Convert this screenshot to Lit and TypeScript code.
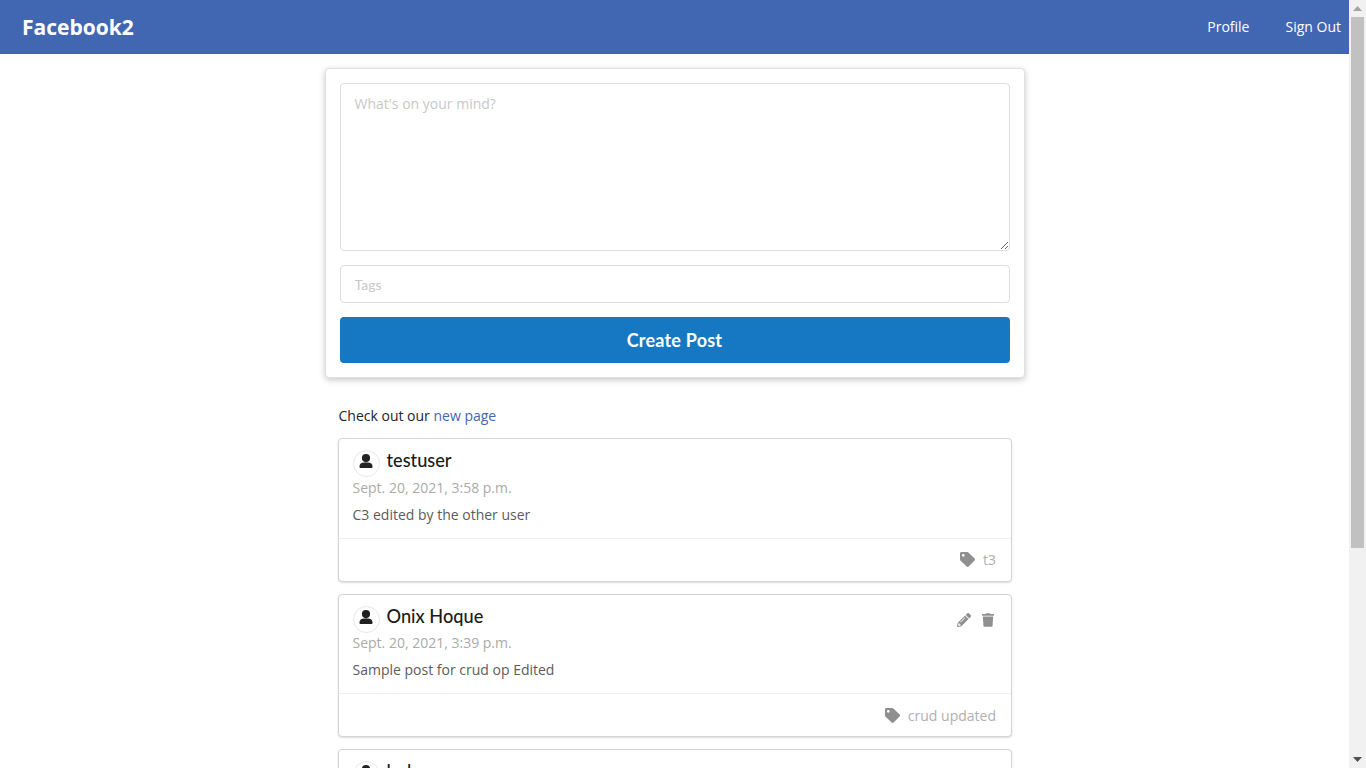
import { LitElement, html, css, svg } from "lit";
import { customElement } from "lit/decorators.js";

const icon = (vb: string, d: string, cls: string) =>
  html`<svg class=${cls} viewBox=${vb} aria-hidden="true">${svg`<path fill="currentColor" d=${d}></path>`}</svg>`;

const USER = "M7 0a4.1 4.1 0 1 1 0 8.2A4.1 4.1 0 0 1 7 0zM5 8.4h4c2.6 0 4.5 1.6 4.5 3.9v.7c0 .6-.5 1-1 1H1.500c-.5 0-1-.4-1-1v-.7c0-2.300 1.900-3.900 4.500-3.900z";
const TAG = "M0 252.118V48C0 21.49 21.49 0 48 0h204.118a48 48 0 0 1 33.941 14.059l211.882 211.882c18.745 18.745 18.745 49.137 0 67.882L293.823 497.941c-18.745 18.745-49.137 18.745-67.882 0L14.059 286.059A48 48 0 0 1 0 252.118zM112 64c-26.51 0-48 21.49-48 48s21.49 48 48 48 48-21.49 48-48-21.49-48-48-48z";
const PENCIL = "M497.9 142.1l-46.1 46.1c-4.7 4.7-12.3 4.7-17 0l-111-111c-4.7-4.7-4.7-12.3 0-17l46.1-46.1c18.7-18.7 49.1-18.7 67.9 0l60.1 60.1c18.8 18.7 18.8 49.1 0 67.9zM284.2 99.8L21.6 362.4.4 483.9c-2.9 16.4 11.4 30.6 27.8 27.8l121.5-21.3 262.6-262.6c4.7-4.7 4.7-12.3 0-17l-111-111c-4.8-4.7-12.4-4.7-17.1 0zM124.1 339.9c-5.5-5.5-5.5-14.3 0-19.8l154-154c5.5-5.5 14.3-5.5 19.8 0s5.5 14.3 0 19.8l-154 154c-5.5 5.5-14.3 5.5-19.8 0zM88 424h48v36.3l-64.5 11.3-31.1-31.1L51.7 376H88v48z";
const TRASH = "M432 32H312l-9.4-18.7A24 24 0 0 0 281.1 0H166.8a23.72 23.72 0 0 0-21.4 13.3L136 32H16A16 16 0 0 0 0 48v32a16 16 0 0 0 16 16h416a16 16 0 0 0 16-16V48a16 16 0 0 0-16-16zM53.2 467a48 48 0 0 0 47.9 45h245.8a48 48 0 0 0 47.9-45L416 128H32z";

interface Post { name: string; date: string; text: string; tags: string; own: boolean; }
const POSTS: Post[] = [
  { name: "testuser", date: "Sept. 20, 2021, 3:58 p.m.", text: "C3 edited by the other user", tags: "t3", own: false },
  { name: "Onix Hoque", date: "Sept. 20, 2021, 3:39 p.m.", text: "Sample post for crud op Edited", tags: "crud updated", own: true },
  { name: "bob", date: "Sept. 20, 2021, 3:12 p.m.", text: "Sample post", tags: "t1", own: false },
];

@customElement("app-root")
export class AppRoot extends LitElement {
  static styles = css`
    :host {
      display: flex;
      height: 100vh;
      overflow: hidden;
      background: #fff;
      font-family: "Open Sans", sans-serif;
      font-size: 14px;
      color: #212529;
    }
    .page { flex: 1; min-width: 0; overflow: hidden; }
    .scrollbar {
      flex: 0 0 17px;
      display: flex;
      flex-direction: column;
      background: #f1f1f1;
    }
    .arrow { flex: 0 0 17px; display: flex; align-items: center; justify-content: center; }
    .arrow svg { width: 9px; height: 5px; display: block; }
    .arrow.up { color: #a3a3a3; }
    .arrow.down { color: #505050; }
    .track { flex: 1; padding: 0 2px; }
    .thumb { height: 531px; background: #c1c1c1; }
    .nav {
      height: 54px;
      box-sizing: border-box;
      background: #4267b2;
      display: flex;
      align-items: center;
      justify-content: space-between;
      padding: 0 8px 2px 22px;
      color: #fff;
    }
    .brand { font-size: 21px; font-weight: 700; color: #fff; text-decoration: none; margin-top: 2px; }
    .links { display: flex; gap: 36px; }
    .links a { color: #fff; text-decoration: none; font-size: 14px; }
    .composer {
      width: 700px;
      box-sizing: border-box;
      margin: 14px auto 0;
      padding: 14px;
      background: #fff;
      border: 1px solid #e0e0e0;
      border-radius: 4px;
      box-shadow: 0 2px 6px rgba(0, 0, 0, 0.22);
      display: flex;
      flex-direction: column;
      gap: 14px;
    }
    textarea, input {
      display: block;
      width: 100%;
      box-sizing: border-box;
      border: 1px solid #dedede;
      border-radius: 4px;
      background: #fff;
      outline: none;
      margin: 0;
      padding: 10px 14px;
      color: #333;
    }
    textarea { height: 168px; font: 14px/20px "Open Sans", sans-serif; resize: vertical; }
    input { height: 38px; font: 14px "Lato", sans-serif; }
    ::placeholder { color: #c8c8c8; opacity: 1; }
    .submit {
      height: 46px;
      border: 0;
      border-radius: 4px;
      background: #1678c2;
      color: #fff;
      font: 700 18px "Lato", sans-serif;
      letter-spacing: 0.2px;
    }
    .feed { width: 674px; margin: 0 auto; padding: 28px 0 24px; box-sizing: border-box; }
    .notice { margin: 0 0 12px; padding-left: 1px; line-height: 20px; color: #212529; }
    .notice a { color: #4267b2; text-decoration: none; }
    .post {
      border: 1px solid #d4d4d5;
      border-radius: 4px;
      box-shadow: 0 1px 2px rgba(34, 36, 38, 0.15);
      margin-bottom: 12px;
      background: #fff;
    }
    .body { padding: 10px 14px 13px; }
    .head { display: flex; align-items: center; height: 27px; margin-top: 1px; }
    .avatar {
      width: 27px;
      height: 27px;
      box-sizing: border-box;
      border: 1px solid #e6e6e6;
      border-radius: 50%;
      display: flex;
      align-items: center;
      justify-content: center;
      color: #212121;
      margin-right: 7px;
    }
    .avatar svg { width: 14px; height: 14px; margin-bottom: 5px; }
    .name { font: 500 18.2px "Lato", sans-serif; color: #1b1b1b; flex: 1; margin-top: -7px; }
    .actions { display: flex; gap: 11px; color: #909090; margin: 2px 2.5px 0 0; }
    .actions svg { width: 14px; height: 14px; }
    .actions svg.trash { width: 12px; }
    .date { color: #aaa; font-size: 14px; line-height: 20px; margin-top: 0.5px; }
    .text { color: #5c5c5c; font-size: 14px; line-height: 20px; margin-top: 7px; }
    .foot {
      border-top: 1px solid #eee;
      height: 42px;
      padding: 0 14.5px;
      display: flex;
      align-items: center;
      justify-content: flex-end;
      gap: 8px;
      color: #b0b0b0;
    }
    .foot svg { width: 15px; height: 15px; color: #8f8f8f; }
  `;

  render() {
    return html`
      <div class="page">
        <nav class="nav">
          <a class="brand" href="#">Facebook2</a>
          <div class="links"><a href="#">Profile</a><a href="#">Sign Out</a></div>
        </nav>
        <form class="composer">
          <textarea placeholder="What's on your mind?"></textarea>
          <input placeholder="Tags" />
          <button class="submit" type="button">Create Post</button>
        </form>
        <section class="feed">
          <p class="notice">Check out our <a href="#">new page</a></p>
          ${POSTS.map(
            (p) => html`
              <article class="post">
                <div class="body">
                  <div class="head">
                    <span class="avatar">${icon("0 0 14 14", USER, "")}</span>
                    <span class="name">${p.name}</span>
                    ${p.own
                      ? html`<span class="actions">${icon("0 0 512 512", PENCIL, "")}${icon("0 0 448 512", TRASH, "trash")}</span>`
                      : ""}
                  </div>
                  <div class="date">${p.date}</div>
                  <div class="text">${p.text}</div>
                </div>
                <div class="foot">${icon("0 0 512 512", TAG, "")}<span>${p.tags}</span></div>
              </article>
            `
          )}
        </section>
      </div>
      <div class="scrollbar" aria-hidden="true">
        <div class="arrow up"><svg viewBox="0 0 9 5"><path fill="currentColor" d="M4.5 0L9 5H0z"></path></svg></div>
        <div class="track"><div class="thumb"></div></div>
        <div class="arrow down"><svg viewBox="0 0 9 5"><path fill="currentColor" d="M4.5 5L0 0h9z"></path></svg></div>
      </div>
    `;
  }
}
